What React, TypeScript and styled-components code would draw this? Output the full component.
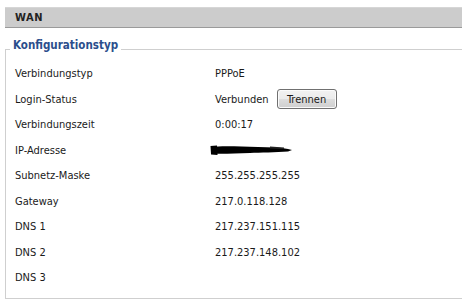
import React from "react";
import styled, { createGlobalStyle } from "styled-components";

const GlobalStyle = createGlobalStyle`
  html, body {
    margin: 0;
    padding: 0;
    background: #ffffff;
  }
  body {
    font-family: "DejaVu Sans Condensed", "DejaVu Sans", "Liberation Sans", sans-serif;
    font-size: 11px;
    color: #1a1a1a;
  }
`;

const Page = styled.div`
  width: 462px;
  height: 306px;
  padding: 7px 0 0 5px;
  box-sizing: border-box;
  overflow: hidden;
`;

const TitleBar = styled.div`
  height: 19px;
  background: #cccccc;
  border-top: 1px solid #d6d6d6;
  border-bottom: 1px solid #9a9a9a;
  box-sizing: content-box;
  display: flex;
  align-items: center;
  padding-left: 10px;
  font-weight: bold;
  font-size: 11px;
  letter-spacing: 0.6px;
  color: #222222;
`;

const Group = styled.fieldset`
  margin: 10px 0 0 0;
  padding: 0 0 7px 4px;
  border: 1px solid #cfcfcf;
  border-right: none;
  min-width: 0;
`;

const Legend = styled.legend`
  padding: 0 3px 8px 3px;
  font-weight: bold;
  font-size: 11.5px;
  line-height: 15px;
  color: #2b4e8c;
`;

const Rows = styled.div`
  padding: 0 0 0 5px;
  display: flex;
  flex-direction: column;
`;

const Row = styled.div`
  height: 25.5px;
  display: flex;
  align-items: center;
`;

const Label = styled.div`
  width: 200px;
  flex-shrink: 0;
`;

const Value = styled.div`
  display: flex;
  align-items: center;
  gap: 8px;
`;

const Button = styled.button`
  height: 20px;
  width: 60px;
  padding: 0;
  font-family: inherit;
  font-size: 11px;
  color: #1a1a1a;
  border: 1px solid #707070;
  border-radius: 3px;
  background: linear-gradient(
    to bottom,
    #f2f2f2 0%,
    #ebebeb 50%,
    #dddddd 51%,
    #cfcfcf 100%
  );
  box-shadow: inset 0 0 0 1px #fbfbfb;
`;

const Scribble: React.FC = () => (
  <svg width="84" height="12" viewBox="0 0 84 12" style={{ marginLeft: -5 }}>
    <path
      d="M1 3 C 12 1.5, 30 2.5, 48 3 C 60 3.2, 70 3.5, 78 5 L 82 6 L 78 7.5 C 66 8.5, 50 8.5, 40 9 C 25 9.5, 10 10, 2 9.5 Z"
      fill="#000"
    />
    <path d="M0.5 2 L 7 1.5 L 7.5 11 L 1 10.5 Z" fill="#000" />
    <path d="M60 2.5 L 74 3.5 L 74 5 L 60 4.5 Z" fill="#222" />
  </svg>
);

const rows: { label: string; value: React.ReactNode }[] = [
  { label: "Verbindungstyp", value: "PPPoE" },
  {
    label: "Login-Status",
    value: (
      <>
        <span>Verbunden</span>
        <Button>Trennen</Button>
      </>
    ),
  },
  { label: "Verbindungszeit", value: "0:00:17" },
  { label: "IP-Adresse", value: <Scribble /> },
  { label: "Subnetz-Maske", value: "255.255.255.255" },
  { label: "Gateway", value: "217.0.118.128" },
  { label: "DNS 1", value: "217.237.151.115" },
  { label: "DNS 2", value: "217.237.148.102" },
  { label: "DNS 3", value: "" },
];

export default function App() {
  return (
    <Page>
      <GlobalStyle />
      <TitleBar>WAN</TitleBar>
      <Group>
        <Legend>Konfigurationstyp</Legend>
        <Rows>
          {rows.map((r) => (
            <Row key={r.label}>
              <Label>{r.label}</Label>
              <Value>{r.value}</Value>
            </Row>
          ))}
        </Rows>
      </Group>
    </Page>
  );
}
